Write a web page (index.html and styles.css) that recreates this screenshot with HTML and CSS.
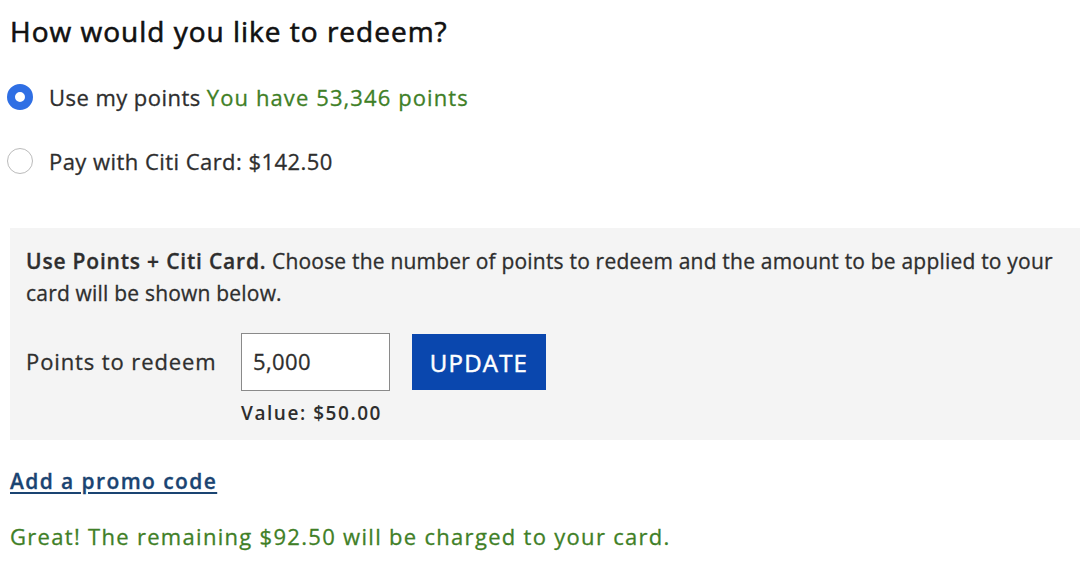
FILE: index.html
```html
<!DOCTYPE html>
<html lang="en">
<head>
<meta charset="utf-8">
<title>Redeem</title>
<link rel="stylesheet" href="styles.css">
</head>
<body>
<main class="page">
  <h1 class="title">How would you like to redeem?</h1>
  <div class="options">
    <label class="option">
      <span class="radio radio-on"></span>
      <span class="option-text">Use my points <span class="green">You have 53,346 points</span></span>
    </label>
    <label class="option">
      <span class="radio"></span>
      <span class="option-text">Pay with Citi Card: $142.50</span>
    </label>
  </div>
  <section class="combo">
    <p class="combo-desc"><strong>Use Points + Citi Card.</strong> Choose the number of points to redeem and the amount to be applied to your<br>card will be shown below.</p>
    <div class="combo-row">
      <span class="combo-label">Points to redeem</span>
      <div class="field">
        <div class="input">5,000</div>
        <div class="value">Value: $50.00</div>
      </div>
      <button class="update">UPDATE</button>
    </div>
  </section>
  <a class="promo" href="#">Add a promo code</a>
  <p class="result">Great! The remaining $92.50 will be charged to your card.</p>
</main>
</body>
</html>
```
FILE: styles.css
```css
* { box-sizing: border-box; }
body {
  margin: 0;
  background: #fff;
  font-family: "Open Sans", "Liberation Sans", sans-serif;
  color: #2e2e2e;
  -webkit-text-stroke: 0.3px currentColor;
}
.page {
  padding: 11px 0 0 10px;
}
.title {
  margin: 0;
  font-size: 28px;
  font-weight: 400;
  color: #111;
  letter-spacing: 1px;
  line-height: 40px;
  -webkit-text-stroke: 0.6px currentColor;
}
.options {
  display: flex;
  flex-direction: column;
  gap: 36px;
  margin-top: 32px;
}
.option {
  display: flex;
  align-items: center;
  gap: 16px;
  height: 28px;
  font-size: 22px;
  letter-spacing: 0.45px;
}
.radio {
  flex: none;
  width: 26px;
  height: 26px;
  border-radius: 50%;
  border: 1px solid #bbb;
  background: #fff;
  margin-left: -3px;
}
.radio-on {
  border: 8.5px solid #2f6fe4;
  background: #fff;
}
.green { color: #3f7f27; letter-spacing: 1.1px; }
.combo {
  margin-top: 53px;
  background: #f4f4f4;
  padding: 17px 16px 13px 16px;
}
.combo-desc {
  margin: 0;
  font-size: 21px;
  line-height: 32px;
  letter-spacing: 0.2px;
  white-space: nowrap;
}
.combo-desc strong { font-weight: 600; letter-spacing: 0.8px; }
.combo-row {
  display: flex;
  align-items: flex-start;
  margin-top: 24px;
}
.combo-label {
  font-size: 22px;
  width: 215px;
  line-height: 57px;
  letter-spacing: 0.9px;
}
.field {
  display: flex;
  flex-direction: column;
}
.input {
  width: 149px;
  height: 58px;
  border: 1.5px solid #8a8a8a;
  background: #fff;
  font-size: 22px;
  line-height: 55px;
  padding-left: 11px;
  letter-spacing: 0.4px;
}
.value {
  margin-top: 8px;
  font-size: 19px;
  font-weight: 600;
  letter-spacing: 1.55px;
  line-height: 28px;
  -webkit-text-stroke: 0;
}
.update {
  margin-left: 22px;
  width: 134px;
  height: 56px;
  margin-top: 1px;
  border: 0;
  background: #0a47ae;
  color: #fff;
  font-family: inherit;
  font-size: 24px;
  font-weight: 400;
  letter-spacing: 1.2px;
  -webkit-text-stroke: 0.5px #fff;
}
.promo {
  display: inline-block;
  margin-top: 27px;
  font-size: 21px;
  font-weight: 600;
  color: #1a4472;
  text-decoration: underline;
  text-underline-offset: 3px;
  letter-spacing: 1.4px;
}
.result {
  margin: 26px 0 0;
  font-size: 22px;
  color: #3f7f27;
  letter-spacing: 1.3px;
}
```
